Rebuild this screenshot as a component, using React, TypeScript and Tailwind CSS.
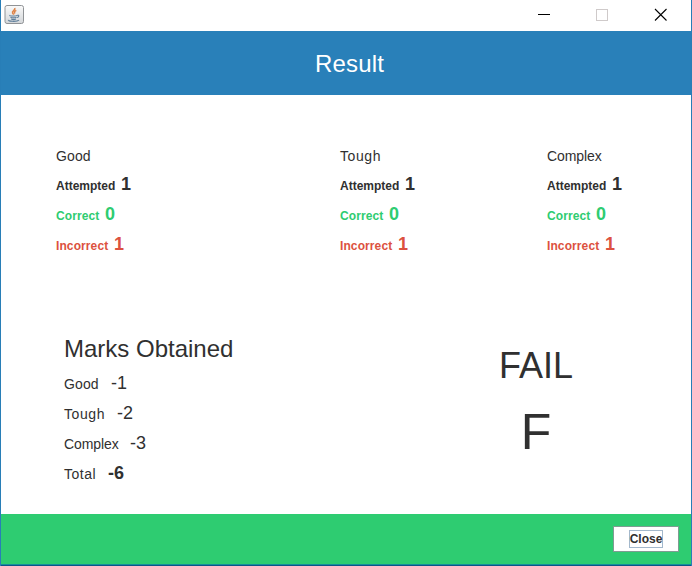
const levels = [
  { name: "Good", width: "w-[284px]", tracking: "tracking-[0.1px]" },
  { name: "Tough", width: "w-[207px]", tracking: "tracking-[0.6px]" },
  { name: "Complex", width: "w-[100px]", tracking: "tracking-[-0.1px]" },
];

const stats = [
  { label: "Attempted", value: 1, color: "text-[#303030]", labelWidth: "w-[65px]", tracking: "tracking-normal" },
  { label: "Correct", value: 0, color: "text-[#2ecc71]", labelWidth: "w-[49px]", tracking: "tracking-[0.1px]" },
  { label: "Incorrect", value: 1, color: "text-[#dc5140]", labelWidth: "w-[58px]", tracking: "tracking-[0.1px]" },
];

const marks = [
  { label: "Good", value: "-1", labelWidth: "w-[47px]", weight: "font-normal", tracking: "tracking-[0.1px]" },
  { label: "Tough", value: "-2", labelWidth: "w-[53px]", weight: "font-normal", tracking: "tracking-[0.6px]" },
  { label: "Complex", value: "-3", labelWidth: "w-[66px]", weight: "font-normal", tracking: "tracking-[-0.1px]" },
  { label: "Total", value: "-6", labelWidth: "w-[44px]", weight: "font-bold", tracking: "tracking-[0.5px]" },
];

function JavaIcon() {
  return (
    <svg width="20" height="20" viewBox="0 0 20 20" fill="none">
      <defs>
        <linearGradient id="tile" x1="0" y1="0" x2="0" y2="1">
          <stop offset="0" stopColor="#fafafa" />
          <stop offset="1" stopColor="#d3d6d9" />
        </linearGradient>
      </defs>
      <rect x="1" y="0.5" width="18.500" height="18" rx="2" fill="url(#tile)" stroke="#909396" />
      <path d="M10.800 3c1 2.200-3.400 3-2.200 5 .4.7 1 1.200 1 1.800M12.300 5.300c-1.800 1-2.400 1.800-1.300 3.200" stroke="#de8245" strokeWidth="1.500" />
      <path d="M6 10.300c-1.600.9 6.500 1.100 7.300-.1M6.500 12.300c1.200.8 4.600.8 6 0M7.200 14c1.200.6 3.600.6 4.800 0M13.300 10.300c2.300-.6 1.700 1.800-.3 2.200M4.500 15c-1.500 1.400 8.500 2 10.500.2" stroke="#5f7f9b" strokeWidth="1.100" />
    </svg>
  );
}

function TitleBar() {
  return (
    <header className="flex h-[31px] shrink-0 items-start bg-white pl-[3px] pt-[5px]">
      <JavaIcon />
      <svg className="ml-auto mr-[24px] mt-[3px]" width="130" height="14" viewBox="0 0 130 14" fill="none">
        <path d="M1 6.500h12" stroke="#000" />
        <rect x="59.500" y="1.500" width="11" height="11" stroke="#cfcaca" />
        <path d="M118 1l11.500 11.500M129.500 1L118 12.500" stroke="#000" strokeWidth="1.100" />
      </svg>
    </header>
  );
}

export default function App() {
  return (
    <div className="flex h-[566px] w-[692px] flex-col overflow-hidden border-x border-[#287eb7] bg-white font-['Liberation_Sans',Arial,sans-serif] text-[#303030]">
      <TitleBar />
      <div className="flex h-[64px] shrink-0 items-center justify-center bg-[#2980b9] pl-[7px]">
        <h1 className="pt-px text-2xl leading-8 tracking-[0.15px] text-white">Result</h1>
      </div>

      <main className="flex h-[419px] shrink-0 flex-col">
        <section className="flex pl-[55px] pt-[46px]">
          {levels.map((level) => (
            <div key={level.name} className={level.width}>
              <h2 className={`h-[28px] text-sm leading-[30px] ${level.tracking}`}>{level.name}</h2>
              {stats.map((s) => (
                <div key={s.label} className={`flex h-[30px] items-baseline font-bold leading-[30px] ${s.color}`}>
                  <span className={`text-xs leading-[30px] ${s.labelWidth} ${s.tracking}`}>{s.label}</span>
                  <span className="text-lg leading-[30px]">{s.value}</span>
                </div>
              ))}
            </div>
          ))}
        </section>

        <section className="flex pl-[63px] pt-[70px]">
          <div className="w-[403px]">
            <h2 className="h-[39px] text-2xl leading-[40px]">Marks Obtained</h2>
            {marks.map((m) => (
              <div key={m.label} className="flex h-[30px] items-baseline">
                <span className={`text-sm leading-[30px] ${m.labelWidth} ${m.tracking}`}>{m.label}</span>
                <span className={`text-lg leading-[30px] ${m.weight}`}>{m.value}</span>
              </div>
            ))}
          </div>
          <div className="flex w-[138px] flex-col items-center pt-[12px]">
            <p className="h-[61px] text-4xl leading-[50px]">FAIL</p>
            <p className="text-[50px] leading-[60px]">F</p>
          </div>
        </section>
      </main>

      <footer className="flex h-[50px] shrink-0 items-center justify-end bg-[#2ecc71] pr-[12px]">
        <button className="flex h-[26px] w-[66px] items-center justify-center border border-[#7f9c92] bg-white">
          <span className="flex h-[18px] w-[34px] items-center justify-center border border-[#a3b8cc] text-xs font-bold leading-[16px]">
            Close
          </span>
        </button>
      </footer>
      <div className="h-[2px] shrink-0 border-t border-[#168f9b] bg-[#0c5688]" />
    </div>
  );
}
